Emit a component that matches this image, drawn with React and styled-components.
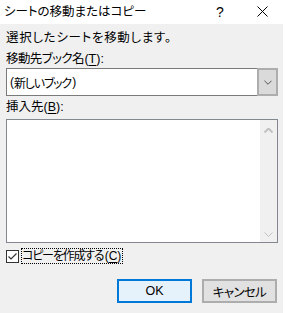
import React from "react";
import styled, { createGlobalStyle } from "styled-components";

const GlobalStyle = createGlobalStyle`
  html, body {
    margin: 0;
    padding: 0;
    background: #f0f0f0;
  }
  body {
    font-family: "Liberation Sans", "Noto Sans CJK JP", sans-serif;
    font-feature-settings: "palt";
    color: #000;
  }
`;

const Window = styled.div`
  width: 285px;
  height: 313px;
  display: flex;
  flex-direction: column;
  background: #f0f0f0;
  box-sizing: border-box;
  border-right: 2px solid #ffffff;
  overflow: hidden;
`;

const TitleBar = styled.div`
  height: 24px;
  flex: none;
  background: #ffffff;
  display: flex;
  align-items: center;
  margin-right: -2px;
`;

const TitleText = styled.div`
  padding-left: 4px;
  font-size: 12.5px;
  line-height: 24px;
  flex: 1;
  margin-top: -1px;
  white-space: nowrap;
`;

const TitleButton = styled.div`
  width: ${(p) => p.$w}px;
  height: 24px;
  display: flex;
  align-items: center;
  justify-content: center;
  font-family: "Liberation Sans", sans-serif;
  font-size: 14px;
  margin-top: -1px;
`;

const Body = styled.div`
  flex: 1;
  display: flex;
  flex-direction: column;
  padding: 0 5px 0 6px;
`;

const Text = styled.div`
  font-size: 12.5px;
  line-height: 15px;
  margin-top: ${(p) => p.$mt || 0}px;
  letter-spacing: ${(p) => p.$ls || 0}px;
  white-space: nowrap;
`;

const Jp = styled.span`
  letter-spacing: ${(p) => p.$ls || 0}px;
  padding-right: ${(p) => (p.$ls < 0 ? -p.$ls : 0)}px;
`;

const U = styled.span`
  text-decoration: underline;
  text-underline-offset: 2px;
`;

const Combo = styled.div`
  margin-top: 1px;
  height: 28px;
  box-sizing: border-box;
  border: 1px solid #7a7a7a;
  background: #ffffff;
  display: flex;
  align-items: stretch;
`;

const ComboText = styled.div`
  flex: 1;
  font-size: 12px;
  display: flex;
  align-items: center;
  padding-left: 3px;
  white-space: pre;
`;

const ComboButton = styled.div`
  width: 17px;
  margin: -1px -1px -1px 0;
  border: 2px solid #adadad;
  background: #dadada;
  display: flex;
  align-items: center;
  justify-content: center;
`;

const ListBox = styled.div`
  margin-top: 4px;
  height: 124px;
  box-sizing: border-box;
  border: 1px solid #828790;
  background: #ffffff;
  display: flex;
`;

const ListContent = styled.div`
  flex: 1;
`;

const ScrollBar = styled.div`
  width: 17px;
  background: #f0f0f0;
  display: flex;
  flex-direction: column;
  justify-content: space-between;
  align-items: center;
  padding: 8px 0 5px;
`;

const CheckRow = styled.div`
  margin-top: 5px;
  height: 16px;
  display: flex;
  align-items: center;
`;

const CheckBox = styled.div`
  width: 13px;
  height: 13px;
  box-sizing: border-box;
  border: 1px solid #333333;
  background: #ffffff;
  display: flex;
  align-items: center;
  justify-content: center;
`;

const FocusLabel = styled.div`
  margin-left: 2px;
  height: 16px;
  box-sizing: border-box;
  border: 1px dotted #000000;
  padding: 0 1px 0 0;
  font-size: 12px;
  line-height: 14px;
  display: flex;
  align-items: center;
  white-space: pre;
`;

const ButtonRow = styled.div`
  margin-top: 15px;
  display: flex;
  justify-content: flex-end;
  gap: 10px;
  padding-right: 1px;
`;

const Button = styled.div`
  width: 75px;
  height: 24px;
  box-sizing: border-box;
  border: ${(p) => (p.$primary ? "2px solid #0078d7" : "2px solid #adadad")};
  background: ${(p) => (p.$primary ? "#e5f1fb" : "#e1e1e1")};
  display: flex;
  align-items: center;
  justify-content: center;
  font-size: 12.5px;
  letter-spacing: ${(p) => (p.$primary ? 0 : -0.6)}px;
`;

const Chevron = ({ up, color, w = 9, h = 5 }) => (
  <svg width={w} height={h} viewBox="0 0 9 5">
    <polyline
      points={up ? "0.5,4.5 4.5,0.5 8.5,4.5" : "0.5,0.5 4.5,4.5 8.5,0.5"}
      fill="none"
      stroke={color}
      strokeWidth={up ? 2 : 1}
    />
  </svg>
);

export default function App() {
  return (
    <>
      <GlobalStyle />
      <Window>
        <TitleBar>
          <TitleText>シートの移動またはコピー</TitleText>
          <TitleButton $w={14}>?</TitleButton>
          <TitleButton $w={28}></TitleButton>
          <TitleButton $w={14}>
            <svg width="11" height="11" viewBox="0 0 11 11">
              <path d="M0.5 0.5 L10.5 10.5 M10.5 0.5 L0.5 10.5" stroke="#000" strokeWidth="1" />
            </svg>
          </TitleButton>
          <TitleButton $w={16}></TitleButton>
        </TitleBar>
        <Body>
          <Text $mt={7} $ls={0.7}>選択したシートを移動します。</Text>
          <Text $mt={6}>
            <Jp $ls={-0.6}>移動先ブック名</Jp>(<U>T</U>):
          </Text>
          <Combo>
            <ComboText>
              (<Jp $ls={-1.2}>新しいブック</Jp>)
            </ComboText>
            <ComboButton>
              <Chevron color="#444" w={8} h={5} />
            </ComboButton>
          </Combo>
          <Text $mt={4}>
            挿入先(<U>B</U>):
          </Text>
          <ListBox>
            <ListContent />
            <ScrollBar>
              <Chevron up color="#c2c2c2" />
              <Chevron color="#c2c2c2" />
            </ScrollBar>
          </ListBox>
          <CheckRow>
            <CheckBox>
              <svg width="11" height="11" viewBox="0 0 11 11">
                <polyline points="1.5,5.5 4,8 9.5,2.5" fill="none" stroke="#333" strokeWidth="1.2" />
              </svg>
            </CheckBox>
            <FocusLabel>
              <Jp $ls={-1.2}>コピーを作成する</Jp>(<U>C</U>)
            </FocusLabel>
          </CheckRow>
          <ButtonRow>
            <Button $primary>OK</Button>
            <Button>キャンセル</Button>
          </ButtonRow>
        </Body>
      </Window>
    </>
  );
}
